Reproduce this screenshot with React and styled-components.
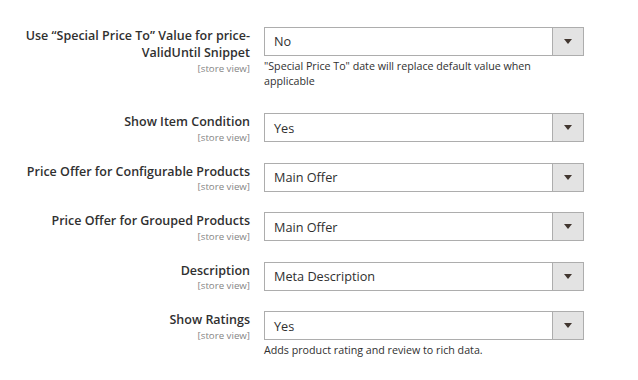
import React from 'react';
import styled, { createGlobalStyle } from 'styled-components';

const GlobalStyle = createGlobalStyle`
  html, body {
    margin: 0;
    padding: 0;
    background: #ffffff;
  }
  body {
    font-family: "Open Sans", "Liberation Sans", Arial, sans-serif;
    color: #303030;
  }
`;

const rows = [
  {
    label: 'Use “Special Price To” Value for price-ValidUntil Snippet',
    value: 'No',
    note: '"Special Price To" date will replace default value when applicable',
  },
  { label: 'Show Item Condition', value: 'Yes' },
  { label: 'Price Offer for Configurable Products', value: 'Main Offer' },
  { label: 'Price Offer for Grouped Products', value: 'Main Offer' },
  { label: 'Description', value: 'Meta Description' },
  {
    label: 'Show Ratings',
    value: 'Yes',
    note: 'Adds product rating and review to rich data.',
  },
];

function App() {
  return (
    <React.Fragment>
      <GlobalStyle />
      <Fieldset>
        {rows.map((row, i) => (
          <Row key={i}>
            <Label>
              <LabelText>{row.label}</LabelText>
              <Scope>[store view]</Scope>
            </Label>
            <Control>
              <Select>
                <Value>{row.value}</Value>
                <Arrow>
                  <svg width="8" height="5" viewBox="0 0 8 5">
                    <path d="M0 0 H8 L4 5 Z" fill="#41362f" />
                  </svg>
                </Arrow>
              </Select>
              {row.note && <Note>{row.note}</Note>}
            </Control>
          </Row>
        ))}
      </Fieldset>
    </React.Fragment>
  );
}

const Fieldset = styled.div`
  padding: 26.5px 0 0 20px;
  display: flex;
  flex-direction: column;
`;

const Row = styled.div`
  display: grid;
  grid-template-columns: 230px 320px;
  column-gap: 14px;
  align-items: start;
  padding-bottom: 20.5px;
`;

const Label = styled.div`
  display: flex;
  flex-direction: column;
  align-items: flex-end;
  text-align: right;
  margin-bottom: -8px;
`;

const LabelText = styled.span`
  font-size: 12.5px;
  font-weight: 600;
  line-height: 17.5px;
  color: #303030;
`;

const Scope = styled.span`
  font-size: 9.7px;
  line-height: 13px;
  color: #858585;
`;

const Control = styled.div`
  display: flex;
  flex-direction: column;
`;

const Select = styled.div`
  display: flex;
  height: 29px;
  box-sizing: border-box;
  border: 1px solid #adadad;
  background: #ffffff;
`;

const Value = styled.div`
  flex: 1;
  display: flex;
  align-items: center;
  padding-left: 9px;
  font-size: 12.7px;
  color: #303030;
`;

const Arrow = styled.div`
  width: 30px;
  display: flex;
  align-items: center;
  justify-content: center;
  background: #e3e3e3;
  border-left: 1px solid #adadad;
`;

const Note = styled.div`
  margin-top: 3px;
  margin-bottom: 3px;
  font-size: 10.7px;
  line-height: 15.5px;
  color: #303030;
  padding-right: 20px;
`;

export default App;
